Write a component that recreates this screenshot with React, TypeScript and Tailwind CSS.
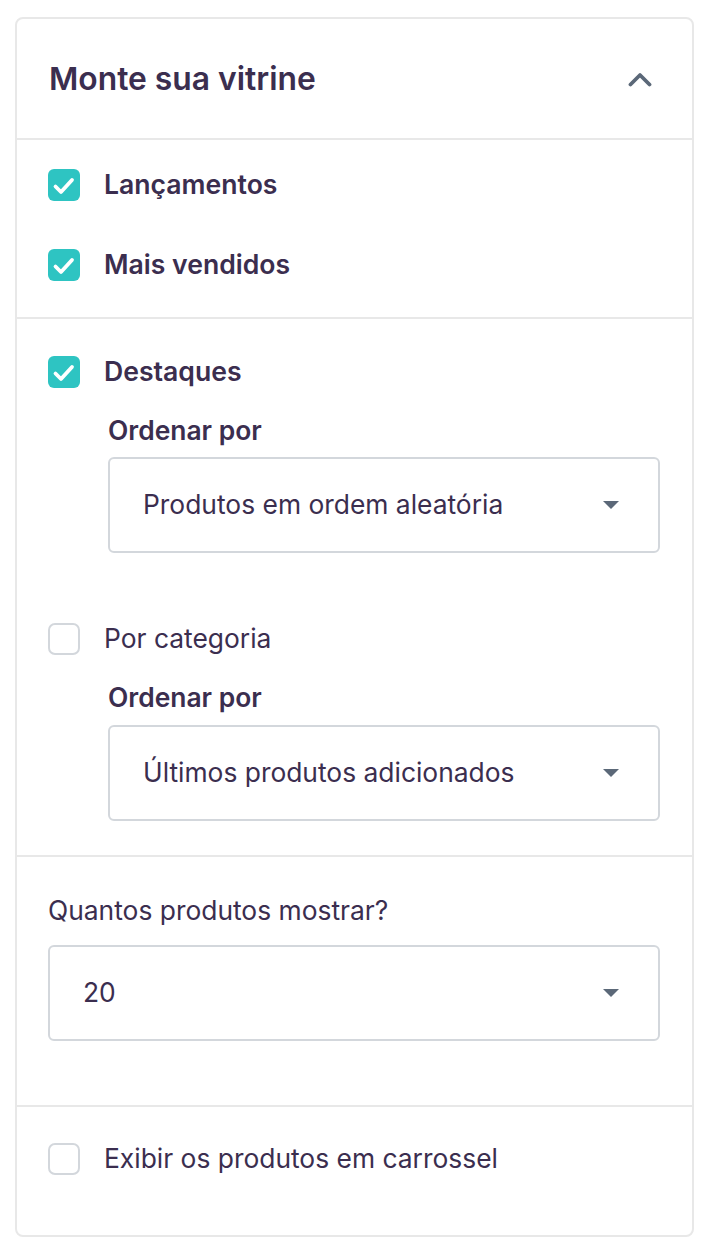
import React from "react";

const TEXT = "text-[#3b2e4f]";

function Check({ checked }: { checked: boolean }) {
  return checked ? (
    <div className="w-8 h-8 rounded-[6px] bg-[#2ec4c2] flex items-center justify-center shrink-0">
      <svg width="32" height="32" viewBox="0 0 32 32" fill="none">
        <path d="M7.5 17.5l5.5 5.5 11-12" stroke="white" strokeWidth="3.8" strokeLinecap="round" strokeLinejoin="round" />
      </svg>
    </div>
  ) : (
    <div className="w-8 h-8 rounded-[7px] border-2 border-[#d3d7dc] bg-white shrink-0" />
  );
}

function Select({ value }: { value: string }) {
  return (
    <div className="h-[96px] border-2 border-[#d3d7dc] rounded-[6px] flex items-center justify-between pl-[33px] pr-[38px]">
      <span className={`text-[26.4px] ${TEXT}`}>{value}</span>
      <svg width="18" height="10" viewBox="0 0 18 10">
        <path d="M1 1h16l-8 8z" fill="#5b6878" />
      </svg>
    </div>
  );
}

export default function App() {
  return (
    <div className="pl-[15px] pt-[17px] pb-[10px] w-[694px]" style={{ fontFamily: "Inter, 'Noto Sans', sans-serif" }}>
      <div className="border-2 border-[#e8e8e8] rounded-[8px] bg-white">
        <div className="h-[121px] flex items-center justify-between pl-[32px] pr-[40px] border-b-2 border-[#e8e8e8]">
          <span className={`text-[31.8px] font-semibold ${TEXT}`}>Monte sua vitrine</span>
          <svg width="24" height="16" viewBox="0 0 24 16" fill="none">
            <path d="M2.5 13.5L12 4l9.5 9.5" stroke="#5b6878" strokeWidth="3.8" strokeLinecap="round" strokeLinejoin="round" />
          </svg>
        </div>

        <div className="pt-[29px] pb-[36px] pl-[31px] flex flex-col gap-[48px] border-b-2 border-[#e8e8e8]">
          <div className="flex items-center gap-[24px] h-8">
            <Check checked />
            <span className={`text-[26.6px] font-semibold ${TEXT}`}>Lançamentos</span>
          </div>
          <div className="flex items-center gap-[24px] h-8">
            <Check checked />
            <span className={`text-[26.6px] font-semibold ${TEXT}`}>Mais vendidos</span>
          </div>
        </div>

        <div className="pt-[37px] pb-[34px] pl-[31px] pr-[32px] border-b-2 border-[#e8e8e8]">
          <div className="flex items-center gap-[24px] h-8">
            <Check checked />
            <span className={`text-[26.6px] font-semibold ${TEXT}`}>Destaques</span>
          </div>
          <div className="pl-[60px] pt-[27px]">
            <div className={`text-[26.4px] font-semibold ${TEXT} leading-[30px]`}>Ordenar por</div>
            <div className="mt-[12px]">
              <Select value="Produtos em ordem aleatória" />
            </div>
          </div>
          <div className="flex items-center gap-[24px] h-8 mt-[70px]">
            <Check checked={false} />
            <span className={`text-[26.4px] ${TEXT}`}>Por categoria</span>
          </div>
          <div className="pl-[60px] pt-[27px]">
            <div className={`text-[26.4px] font-semibold ${TEXT} leading-[30px]`}>Ordenar por</div>
            <div className="mt-[13px]">
              <Select value="Últimos produtos adicionados" />
            </div>
          </div>
        </div>

        <div className="pt-[38px] pb-[64px] pl-[31px] pr-[32px] border-b-2 border-[#e8e8e8]">
          <div className={`text-[26.4px] ${TEXT} leading-[30px]`}>Quantos produtos mostrar?</div>
          <div className="mt-[20px]">
            <Select value="20" />
          </div>
        </div>

        <div className="pt-[36px] pb-[60px] pl-[31px]">
          <div className="flex items-center gap-[24px] h-8">
            <Check checked={false} />
            <span className={`text-[26.4px] ${TEXT}`}>Exibir os produtos em carrossel</span>
          </div>
        </div>
      </div>
    </div>
  );
}
